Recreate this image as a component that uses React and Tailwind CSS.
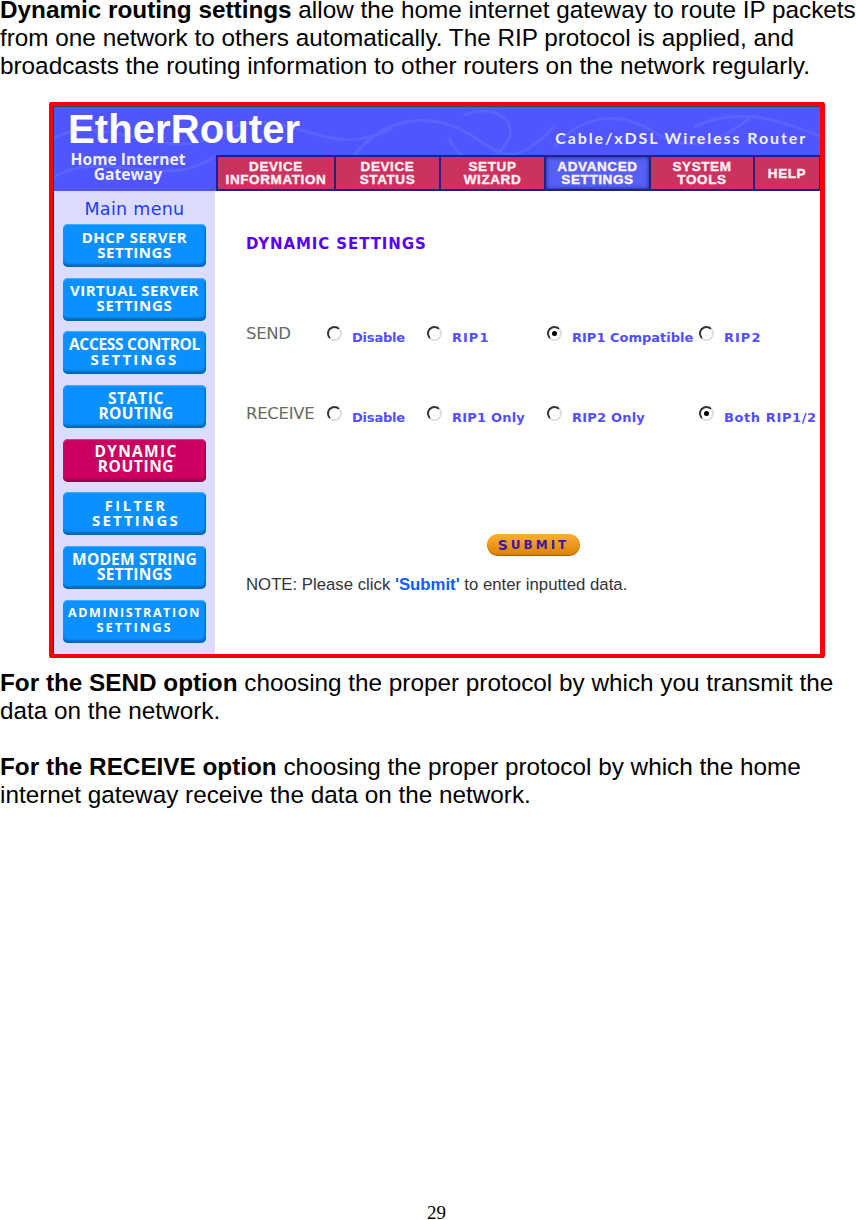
const menu = [
  { lines: [['DHCP SERVER', 'text-[15px] tracking-[0.5px]'], ['SETTINGS', 'text-[15px] tracking-[0.5px]']] },
  { lines: [['VIRTUAL SERVER', 'text-[15px] tracking-[0.5px]'], ['SETTINGS', 'text-[15px] tracking-[0.7px]']] },
  { lines: [['ACCESS CONTROL', 'text-[15.5px] tracking-[-0.3px]'], ['SETTINGS', 'text-[15px] tracking-[2.2px]']] },
  { lines: [['STATIC', 'text-[15.5px] tracking-[0.6px] pl-[3px]'], ['ROUTING', 'text-[15.5px] tracking-[0.4px] pl-[3px]']] },
  { lines: [['DYNAMIC', 'text-[15.5px] tracking-[1.3px] pl-[3px]'], ['ROUTING', 'text-[15.5px] tracking-[0.6px] pl-[3px]']], active: true },
  { lines: [['FILTER', 'text-[14.5px] tracking-[2.6px] pl-[3px]'], ['SETTINGS', 'text-[15px] tracking-[2.2px] pl-[3px]']] },
  { lines: [['MODEM STRING', 'text-[15.5px] tracking-[0.2px]'], ['SETTINGS', 'text-[15.5px] tracking-[0.3px]']] },
  { lines: [['ADMINISTRATION', 'text-[12.5px] tracking-[1.6px]'], ['SETTINGS', 'text-[13px] tracking-[1.9px]']] },
];

const tabs = [
  { lines: ['DEVICE', 'INFORMATION'], cls: 'w-[116px]' },
  { lines: ['DEVICE', 'STATUS'], cls: 'w-[103px]' },
  { lines: ['SETUP', 'WIZARD'], cls: 'w-[103px]' },
  { lines: ['ADVANCED', 'SETTINGS'], cls: 'w-[103px]', active: true },
  { lines: ['SYSTEM', 'TOOLS'], cls: 'w-[102px]' },
  { lines: ['HELP'], cls: 'w-[64px]' },
];

const sendOptions = [
  { label: 'Disable', cls: 'w-[100px]', trk: 'tracking-[-0.2px]' },
  { label: 'RIP1', cls: 'w-[120px]', trk: 'tracking-[1px]' },
  { label: 'RIP1 Compatible', cls: 'w-[152px]', trk: 'tracking-[0px]', checked: true },
  { label: 'RIP2', cls: 'w-[100px]', trk: 'tracking-[1px]' },
];

const receiveOptions = [
  { label: 'Disable', cls: 'w-[100px]', trk: 'tracking-[-0.2px]' },
  { label: 'RIP1 Only', cls: 'w-[120px]', trk: 'tracking-[0.2px]' },
  { label: 'RIP2 Only', cls: 'w-[152px]', trk: 'tracking-[0.2px]' },
  { label: 'Both RIP1/2', cls: 'w-[118px]', trk: 'tracking-[0.6px]', checked: true },
];

function Radio({ label, checked, cls, trk }) {
  return (
    <div className={`mt-[2px] flex shrink-0 items-start ${cls}`}>
      <span className="flex h-[15px] w-[15px] items-center justify-center rounded-full border-2 border-t-[#333333] border-l-[#333333] border-r-[#dddddd] border-b-[#dddddd] bg-white">
        {checked && <span className="h-[5px] w-[5px] rounded-full bg-black" />}
      </span>
      <span className={`ml-[10px] mt-[3px] whitespace-nowrap font-['DejaVu_Sans'] text-[13px] leading-[18px] font-bold text-[#5050ff] ${trk}`}>
        {label}
      </span>
    </div>
  );
}

function OptionRow({ title, options }) {
  return (
    <div className="flex items-start">
      <div className="w-[81px] shrink-0 font-['DejaVu_Sans'] text-[16.5px] leading-[20px] tracking-[-0.3px] text-[#666a60]">
        {title}
      </div>
      {options.map((o) => (
        <Radio key={o.label} {...o} />
      ))}
    </div>
  );
}

export default function App() {
  return (
    <div className="flex h-[1220px] w-[856px] flex-col overflow-hidden bg-white font-['Liberation_Sans',sans-serif] text-[24.3px] leading-[28px] text-black">
      <p className="whitespace-nowrap leading-[20px]">
        <b>Dynamic routing settings</b> allow the home internet gateway to route IP packets
      </p>
      <p className="mt-1 whitespace-nowrap">
        from one network to others automatically. The RIP protocol is applied, and
        <br />
        broadcasts the routing information to other routers on the network regularly.
      </p>

      {/* Router screenshot */}
      <div className="ml-[49px] mt-[22px] flex h-[556px] w-[776px] shrink-0 flex-col rounded-[2px] border-y-[4px] border-r-[5px] border-l-[4px] border-[#ff0000] bg-[#333333] pl-[1px]">
        <div className="relative h-[85px] shrink-0 overflow-hidden border-t border-[#444444] bg-[#5055ff]">
          <svg className="absolute inset-0" width="768" height="85" fill="none" stroke="#5c62ff" strokeWidth="3">
            <path d="M0 30C60 5 110 60 170 25S270 60 340 20" />
            <path d="M0 70C50 40 110 85 160 50" />
            <path d="M300 48C340 0 390 10 420 30S460 60 500 20" />
            <path d="M410 8C440 -5 470 15 450 40S400 50 395 30" />
            <path d="M500 40C530 5 570 5 600 25S660 40 700 8" />
            <path d="M640 20C680 0 720 10 768 30" />
          </svg>
          <div className="relative flex h-[48px] items-start justify-between">
            <span className="ml-[14px] text-[40px] leading-[44px] font-bold tracking-[0.1px] text-white">
              EtherRouter
            </span>
            <span className="mr-[13px] mt-[22px] font-['Lato'] text-[16px] leading-[18px] font-bold tracking-[1.9px] text-[#eef0ff]">
              Cable/xDSL Wireless Router
            </span>
          </div>
          <div className="relative flex h-[36px]">
            <div className="-mt-[3px] ml-[16px] mr-[30px] w-[116px] whitespace-nowrap text-center font-['Open_Sans'] text-[15.6px] leading-[15px] font-bold text-[#eef0ff]">
              Home Internet
              <br />
              Gateway
            </div>
            <div className="flex h-[36px] w-[604px] items-stretch gap-[2px] bg-[#20208c] py-[2px] pl-[2px]">
              {tabs.map((t) => (
                <div
                  key={t.lines[0] + t.lines[1]}
                  className={`flex shrink-0 flex-col items-center justify-center text-[13.5px] leading-[13px] font-bold tracking-[0.6px] text-[#fff0f4] [-webkit-text-stroke:0.4px_#fff0f4] ${t.cls} ${
                    t.active ? 'bg-[#5560f5] shadow-[inset_0_0_4px_#20208c]' : 'bg-[#cc325e]'
                  }`}
                >
                  {t.lines.map((l) => (
                    <span key={l}>{l}</span>
                  ))}
                </div>
              ))}
            </div>
          </div>
        </div>

        <div className="flex min-h-0 flex-1">
          {/* Sidebar */}
          <div className="flex w-[161px] shrink-0 flex-col items-center bg-[#dcdcff]">
            <div className="mt-[8px] h-[25px] whitespace-nowrap font-['DejaVu_Sans'] text-[17.5px] leading-[20px] tracking-[0.3px] text-[#1a3cff]">
              Main menu
            </div>
            <div className="flex flex-col gap-[10.7px]">
              {menu.map((m) => (
                <div
                  key={m.lines[0][0]}
                  className={`flex h-[43px] w-[143px] flex-col items-center justify-center rounded-[5px] pb-[2px] font-['Open_Sans'] font-bold text-white ${
                    m.active
                      ? 'bg-[#cc0060] shadow-[inset_-1px_-3px_2px_#99004a,inset_0_1px_1px_#e0408a]'
                      : 'bg-[#0a90ff] shadow-[inset_-1px_-3px_2px_#0068b8,inset_0_1px_1px_#45adff]'
                  }`}
                >
                  {m.lines.map(([text, cls]) => (
                    <span key={text} className={`whitespace-nowrap leading-[15px] ${cls}`}>
                      {text}
                    </span>
                  ))}
                </div>
              ))}
            </div>
          </div>

          {/* Content */}
          <div className="flex flex-1 flex-col bg-white pl-[31px]">
            <div className="mt-[43px] font-['DejaVu_Sans'] text-[15px] leading-[20px] font-bold tracking-[0.9px] text-[#5a00f5]">
              DYNAMIC SETTINGS
            </div>
            <div className="mt-[70px]">
              <OptionRow title="SEND" options={sendOptions} />
            </div>
            <div className="mt-[57px]">
              <OptionRow title="RECEIVE" options={receiveOptions} />
            </div>
            <div className="ml-[241px] mt-[107px] flex h-[22px] w-[93px] items-center justify-center rounded-full bg-[#f09a10] bg-gradient-to-b from-[#ffae30] to-[#d98200] font-['DejaVu_Sans'] text-[12px] leading-none font-bold tracking-[3px] text-[#3d1a9c] shadow-[inset_0_-1px_1px_#a86200]">
              <span className="text-[14px]">S</span>UBMIT
            </div>
            <div className="mt-[19px] whitespace-nowrap text-[16.75px] leading-[20px] text-[#333333]">
              NOTE: Please click <b className="text-[#0a60ff]">'Submit'</b> to enter inputted data.
            </div>
          </div>
        </div>
      </div>

      <p className="mt-[11px] whitespace-nowrap">
        <b>For the SEND option</b> choosing the proper protocol by which you transmit the
        <br />
        data on the network.
      </p>
      <p className="mt-[28px] whitespace-nowrap">
        <b>For the RECEIVE option</b> choosing the proper protocol by which the home
        <br />
        internet gateway receive the data on the network.
      </p>

      <div className="mt-auto pl-[427px] font-['Liberation_Serif',serif] text-[19px] leading-[14px]">
        29
      </div>
    </div>
  );
}
